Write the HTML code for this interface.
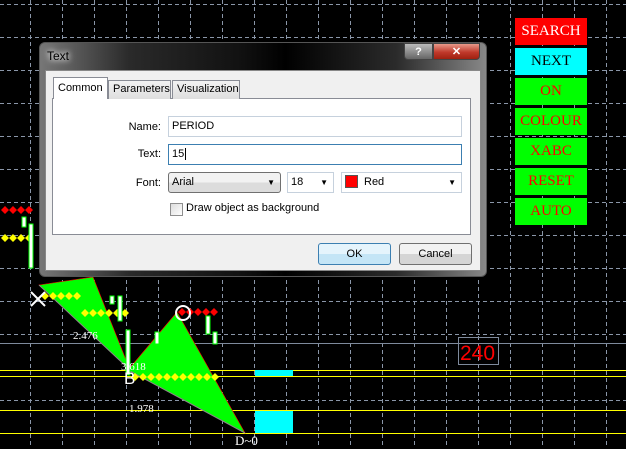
<!DOCTYPE html>
<html><head><meta charset="utf-8"><style>
*{margin:0;padding:0;box-sizing:border-box}
body{width:626px;height:446px;background:#000;position:relative;overflow:hidden;font-family:"Liberation Sans",sans-serif;font-size:11px}
.a{position:absolute}
.btn{position:absolute;left:515px;width:72px;height:27px;font-family:"Liberation Serif",serif;font-size:15px;text-align:center;line-height:27px}
.lbl{position:absolute;width:60px;text-align:right;left:101px;color:#000}
.inp{position:absolute;background:#fff;border:1px solid #c6d1dd;height:21px;padding-left:3px;line-height:19px}
.tab{position:absolute;top:80px;height:19px;border:1px solid #898c95;border-bottom:none;background:linear-gradient(#f2f2f2,#dedede);padding:0 4px;line-height:17px}
.wb{position:absolute;height:22px;border:1px solid #707070;border-radius:3px;background:linear-gradient(#f2f2f2 50%,#d5d5d5 50%);text-align:center;line-height:20px}
.g{color:#fff;font-family:"Liberation Serif",serif;font-size:11px;position:absolute}
</style></head><body>
<svg class="a" style="left:0;top:0" width="626" height="446">
<g stroke="#8a96a8" stroke-width="1" stroke-dasharray="4,3">
<path d="M30.5 0V446M62.5 0V446M94.5 0V446M126.5 0V446M158.5 0V446M190.5 0V446M222.5 0V446M254.5 0V446M286.5 0V446M318.5 0V446M350.5 0V446M382.5 0V446M414.5 0V446M446.5 0V446M478.5 0V446M510.5 0V446M542.5 0V446M574.5 0V446M606.5 0V446"/>
<path d="M0 4.5H626M0 37.5H626M0 70.5H626M0 103.5H626M0 136.5H626M0 169.5H626M0 202.5H626M0 235.5H626M0 268.5H626M0 301.5H626M0 334.5H626M0 400.5H626"/>
</g>
<path d="M0 343.5H626" stroke="#7e8a9c"/>
<path d="M0 370.5H626M0 376.5H626M0 410.5H626M0 433.5H626" stroke="#ffff00"/>
<rect x="255" y="370" width="38" height="6" fill="#0ff"/>
<rect x="255" y="411" width="38" height="22" fill="#0ff"/>
<polygon points="39,285 93,277 130,370" fill="#00ff00" stroke="#f00" stroke-width="0.6"/>
<polygon points="128,370 177,312 245,433" fill="#00ff00" stroke="#f00" stroke-width="0.6"/>
<path d="M39 285L130 370M128 370L245 433" stroke="#888" stroke-width="1"/>
<g fill="#ff0">
<path d="M5 234l4 4-4 4-4-4zM13 234l4 4-4 4-4-4zM21 234l4 4-4 4-4-4zM29 234l4 4-4 4-4-4z"/>
<path d="M45 292l4 4-4 4-4-4zM53 292l4 4-4 4-4-4zM61 292l4 4-4 4-4-4zM69 292l4 4-4 4-4-4zM77 292l4 4-4 4-4-4z"/>
<path d="M85 309l4 4-4 4-4-4zM93 309l4 4-4 4-4-4zM101 309l4 4-4 4-4-4zM109 309l4 4-4 4-4-4zM117 309l4 4-4 4-4-4zM125 309l4 4-4 4-4-4z"/>
<path d="M135 373l4 4-4 4-4-4zM143 373l4 4-4 4-4-4zM151 373l4 4-4 4-4-4zM159 373l4 4-4 4-4-4zM167 373l4 4-4 4-4-4zM175 373l4 4-4 4-4-4zM183 373l4 4-4 4-4-4zM191 373l4 4-4 4-4-4zM199 373l4 4-4 4-4-4zM207 373l4 4-4 4-4-4zM215 373l4 4-4 4-4-4z"/>
</g>
<g fill="#f00">
<path d="M5 206l4 4-4 4-4-4zM13 206l4 4-4 4-4-4zM21 206l4 4-4 4-4-4zM29 206l4 4-4 4-4-4z"/>
<path d="M182 308l4 4-4 4-4-4zM190 308l4 4-4 4-4-4zM198 308l4 4-4 4-4-4zM206 308l4 4-4 4-4-4zM214 308l4 4-4 4-4-4z"/>
</g>
<g fill="#fff" stroke="#00ff00" stroke-width="1">
<rect x="29" y="224" width="4" height="44"/><rect x="22" y="217" width="4" height="10"/><rect x="118" y="296" width="4" height="25"/><rect x="126" y="330" width="4" height="45"/>
<rect x="155" y="332" width="4" height="12"/><rect x="206" y="316" width="4" height="18"/><rect x="213" y="332" width="4" height="12"/><rect x="110" y="296" width="4" height="8"/>
</g>
<path d="M31 292L45 306M45 292L31 306" stroke="#fff" stroke-width="2"/>
<circle cx="183" cy="313" r="7" fill="none" stroke="#fff" stroke-width="2"/>
<rect x="458.5" y="337.5" width="40" height="27" fill="none" stroke="#7e8a9c"/>
<text x="460" y="360" fill="#f00" font-family="Liberation Sans" font-size="21">240</text>
</svg>
<div class="g" style="left:73px;top:330px">2.476</div>
<div class="g" style="left:121px;top:361px">3.618</div>
<div class="g" style="left:129px;top:403px">1.978</div>
<div class="a" style="left:124px;top:369px;color:#fff;font-size:17px;font-family:'Liberation Sans'">B</div>
<div class="a" style="left:235px;top:433px;color:#fff;font-size:13px;font-family:'Liberation Serif'">D~0</div>

<div class="btn" style="top:18px;background:#f00;color:#fff">SEARCH</div>
<div class="btn" style="top:48px;background:#0ff;color:#000">NEXT</div>
<div class="btn" style="top:78px;background:#00ff00;color:#f00">ON</div>
<div class="btn" style="top:108px;background:#00ff00;color:#f00">COLOUR</div>
<div class="btn" style="top:138px;background:#00ff00;color:#f00">XABC</div>
<div class="btn" style="top:168px;background:#00ff00;color:#f00">RESET</div>
<div class="btn" style="top:198px;background:#00ff00;color:#f00">AUTO</div>

<div class="a" style="left:39px;top:42px;width:448px;height:235px;border:1px solid #555;border-radius:6px;background:linear-gradient(90deg,#777 0%,#2a2a2a 20%,#111 45%,#000 55%,#2b2b2b 80%,#888 100%)"></div>
<div class="a" style="left:47px;top:49px;color:#000;font-size:12px;text-shadow:0 0 6px #fff,0 0 8px #fff">Text</div>
<div class="a" style="left:404px;top:43px;width:29px;height:17px;border:1px solid #444;border-radius:0 0 0 4px;background:linear-gradient(#bbb,#666);color:#fff;text-align:center;font-weight:bold;line-height:16px">?</div>
<div class="a" style="left:433px;top:43px;width:47px;height:17px;border:1px solid #444;border-radius:0 0 4px 0;background:linear-gradient(#e89a8a,#c0392b 55%,#a02010);color:#fff;text-align:center;font-weight:bold;line-height:16px">✕</div>
<div class="a" style="left:45px;top:70px;width:436px;height:201px;background:#f0f0f0;border:1px solid #888"></div>
<div class="a" style="left:52px;top:98px;width:419px;height:137px;background:#fff;border:1px solid #898c95"></div>
<div class="tab" style="left:108px;width:63px">Parameters</div>
<div class="tab" style="left:172px;width:68px">Visualization</div>
<div class="tab" style="left:53px;top:77px;height:22px;width:55px;background:#fff;line-height:20px">Common</div>
<div class="lbl" style="top:121px">Name:</div>
<div class="lbl" style="top:148px">Text:</div>
<div class="lbl" style="top:177px">Font:</div>
<div class="inp" style="left:168px;top:116px;width:294px">PERIOD</div>
<div class="inp" style="left:168px;top:144px;width:294px;border-color:#3c7fb1">15<span style="border-left:1px solid #000;margin-left:1px"></span></div>
<div class="inp" style="left:168px;top:172px;width:113px;background:linear-gradient(#f2f2f2 50%,#dcdcdc 50%);border-color:#707070;border-radius:3px">Arial<span style="position:absolute;right:5px;font-size:8px">▼</span></div>
<div class="inp" style="left:287px;top:172px;width:47px">18<span style="position:absolute;right:5px;font-size:8px">▼</span></div>
<div class="inp" style="left:341px;top:172px;width:121px"><span style="display:inline-block;width:13px;height:13px;background:#f00;border:1px solid #555;vertical-align:-3px;margin-right:6px"></span>Red<span style="position:absolute;right:5px;font-size:8px">▼</span></div>
<div class="a" style="left:170px;top:203px;width:13px;height:13px;border:1px solid #8f8f8f;background:linear-gradient(135deg,#ddd,#fff)"></div>
<div class="a" style="left:186px;top:202px">Draw object as background</div>
<div class="wb" style="left:318px;top:243px;width:73px;border-color:#3c7fb1;background:linear-gradient(#e5f4fc 50%,#c4e5f6 50%)">OK</div>
<div class="wb" style="left:399px;top:243px;width:73px">Cancel</div>
</body></html>
